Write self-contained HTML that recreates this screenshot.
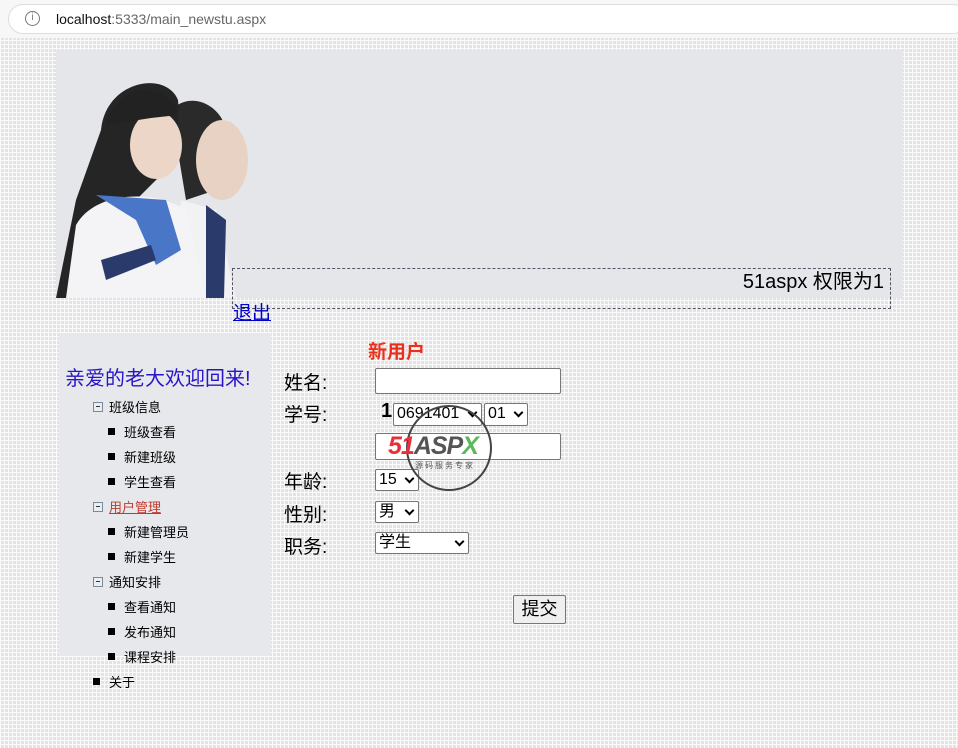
<!DOCTYPE html>
<html><head><meta charset="utf-8"><style>
*{margin:0;padding:0;box-sizing:border-box}
body{width:958px;height:748px;overflow:hidden;font-family:"Liberation Sans","Noto Sans CJK SC",sans-serif;
background-color:#e3e3e3;background-image:linear-gradient(#fafafa 1px,transparent 1px),linear-gradient(90deg,#fafafa 1px,transparent 1px);background-size:4px 4px;position:relative}
.bar{position:absolute;left:0;top:0;width:958px;height:38px;background:#f7f7f7}
.url{position:absolute;left:8px;top:4px;width:960px;height:30px;border:1px solid #ddd;border-radius:15px;background:#fff;font-size:14px;line-height:28px;padding-left:47px;color:#666}
.url b{font-weight:normal;color:#111}
.info{position:absolute;left:25px;top:11px;width:15px;height:15px;border:1.5px solid #777;border-radius:50%;font-size:10px;line-height:12px;text-align:center;color:#777}
.hdr{position:absolute;left:56px;top:50px;width:847px;height:248px;background:#e5e6ea;overflow:hidden}
.dash{position:absolute;left:232px;top:268px;width:659px;height:41px;border:1px dashed #556;text-align:right;font-size:20px;padding:0 6px 0 0;line-height:26px;color:#000}
.exit{position:absolute;left:233px;top:298px;font-size:19px;color:#00c;text-decoration:underline}
.side{position:absolute;left:59px;top:333px;width:212px;height:323px;background:#e7e8ec}
.welcome{position:absolute;left:65px;top:362px;font-size:20px;color:#2a14c8}
.it{position:absolute;font-size:13px;color:#000;line-height:16px}
.pm{display:inline-block;width:10px;height:10px;border:1px solid #7a8a9a;background:#e8eef4;vertical-align:middle;margin-right:6px;position:relative;top:-2px}
.pm:after{content:"";position:absolute;left:2px;top:3.5px;width:4px;height:1px;background:#333}
.sq{display:inline-block;width:7px;height:7px;background:#000;margin-right:9px;vertical-align:middle;position:relative;top:-2px}
.lbl{position:absolute;left:284px;font-size:19px;color:#000}
.inp{position:absolute;background:#fff;border:1px solid #777;border-radius:2px}
.sel{position:absolute;background:#fff;border:1px solid #777;border-radius:2px;font-size:16px;padding-left:3px;line-height:20px}
.sel:after{content:"";position:absolute;right:5px;top:5px;width:5px;height:5px;border-right:2px solid #000;border-bottom:2px solid #000;transform:rotate(45deg)}
</style></head><body>
<div class="bar"><div class="url"><b>localhost</b>:5333/main_newstu.aspx</div><div class="info">i</div></div>
<div class="hdr">
<svg width="200" height="248" style="position:absolute;left:0;top:0">
<path d="M115 60 C135 40 165 55 170 80 L160 140 L130 150 Z" fill="#2a2a2a"/>
<ellipse cx="166" cy="110" rx="26" ry="40" fill="#e8d2c4"/>
<path d="M125 150 L160 160 L180 248 L110 248 Z" fill="#f2f2f4"/>
<path d="M150 155 L170 170 L168 248 L150 248 Z" fill="#2a3a6a"/>
<path d="M45 80 C50 30 110 20 122 50 C125 80 115 100 110 120 L80 150 L40 248 L0 248 L20 150 Z" fill="#252525"/>
<ellipse cx="100" cy="95" rx="26" ry="34" fill="#ecd6c8"/>
<path d="M50 75 C60 30 115 30 122 65 L95 68 Z" fill="#222"/>
<path d="M20 175 C40 140 100 140 130 160 L150 248 L10 248 Z" fill="#f4f4f6"/>
<path d="M40 145 L110 150 L125 200 L100 215 L80 170 Z" fill="#4a76c8"/>
<path d="M45 210 L95 195 L100 210 L50 230 Z" fill="#2a3a6a"/>
</svg>
</div>
<div class="dash">51aspx 权限为1</div>
<div class="exit">退出</div>
<div class="side"></div>
<div class="welcome">亲爱的老大欢迎回来!</div>
<div class="it" style="left:93px;top:400px"><span class="pm"></span>班级信息</div>
<div class="it" style="left:108px;top:425px"><span class="sq"></span>班级查看</div>
<div class="it" style="left:108px;top:450px"><span class="sq"></span>新建班级</div>
<div class="it" style="left:108px;top:475px"><span class="sq"></span>学生查看</div>
<div class="it" style="left:93px;top:500px"><span class="pm"></span><span style="color:#c0392b;text-decoration:underline">用户管理</span></div>
<div class="it" style="left:108px;top:525px"><span class="sq"></span>新建管理员</div>
<div class="it" style="left:108px;top:550px"><span class="sq"></span>新建学生</div>
<div class="it" style="left:93px;top:575px"><span class="pm"></span>通知安排</div>
<div class="it" style="left:108px;top:600px"><span class="sq"></span>查看通知</div>
<div class="it" style="left:108px;top:625px"><span class="sq"></span>发布通知</div>
<div class="it" style="left:108px;top:650px"><span class="sq"></span>课程安排</div>
<div class="it" style="left:93px;top:675px"><span class="sq"></span>关于</div>
<div style="position:absolute;left:368px;top:337px;font-size:19px;font-weight:bold;color:#e8301c">新用户</div>
<div class="lbl" style="top:368px">姓名:</div>
<div class="lbl" style="top:400px">学号:</div>
<div class="lbl" style="top:467px">年龄:</div>
<div class="lbl" style="top:500px">性别:</div>
<div class="lbl" style="top:532px">职务:</div>
<div class="inp" style="left:375px;top:368px;width:186px;height:26px"></div>
<div style="position:absolute;left:381px;top:400px;font-size:20px;font-weight:bold">1</div>
<div class="sel" style="left:393px;top:403px;width:89px;height:23px">0691401</div>
<div class="sel" style="left:484px;top:403px;width:44px;height:23px">01</div>
<div class="inp" style="left:375px;top:433px;width:186px;height:27px"></div>
<div class="sel" style="left:375px;top:469px;width:44px;height:22px">15</div>
<div class="sel" style="left:375px;top:501px;width:44px;height:22px">男</div>
<div class="sel" style="left:375px;top:532px;width:94px;height:22px">学生</div>
<div style="position:absolute;left:406px;top:405px;width:86px;height:86px;border:2px solid #444;border-radius:50%"></div>
<div style="position:absolute;left:388px;top:432px;font-size:25px;font-weight:bold;font-style:italic;letter-spacing:-1px"><span style="color:#e8303a">51</span><span style="color:#555">ASP</span><span style="color:#5cb85c">X</span></div>
<div style="position:absolute;left:415px;top:460px;font-size:8px;color:#555;letter-spacing:2px">源码服务专家</div>
<div style="position:absolute;left:513px;top:595px;width:53px;height:29px;border:1px solid #777;border-radius:2px;background:#efefef;font-size:18px;text-align:center;line-height:27px">提交</div>
</body></html>
